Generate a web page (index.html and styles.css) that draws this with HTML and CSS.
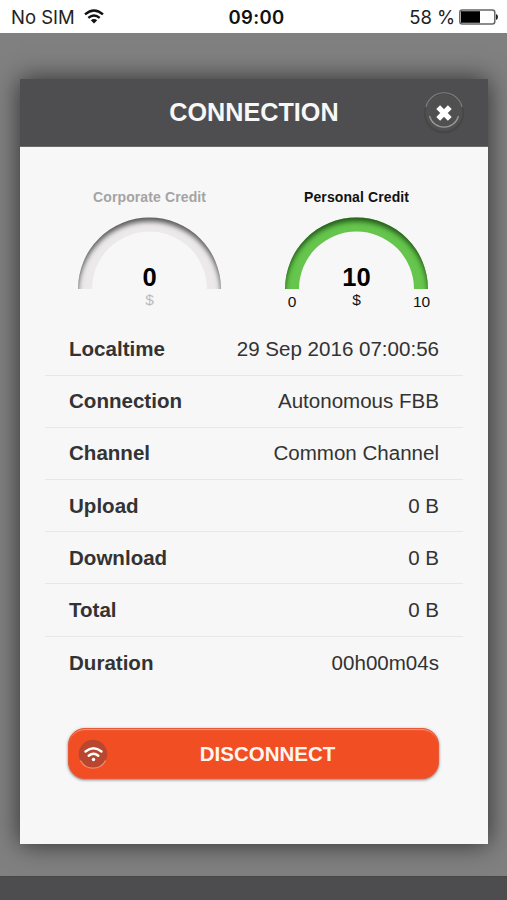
FILE: index.html
```html
<!DOCTYPE html>
<html lang="en">
<head>
<meta charset="utf-8">
<title>Connection</title>
<link rel="stylesheet" href="styles.css">
</head>
<body>
<header class="status">
  <div class="carrier"><span>No SIM</span>
    <svg width="20" height="16" viewBox="0 0 20 16"><g fill="none" stroke="#111" stroke-width="2.4"><path d="M1 5.4Q10-2.4 19 5.4"/><path d="M4.3 8.9Q10 4 15.700 8.900"/></g><path d="M6.800 11.300Q10 8.700 13.200 11.300L10 14.500Z" fill="#111"/></svg>
  </div>
  <div class="clock">09:00</div>
  <div class="battery"><span>58 %</span>
    <svg width="40" height="16" viewBox="0 0 40 16"><rect x=".8" y="1" width="35" height="14" rx="2.500" fill="#fff" stroke="#666" stroke-width="1.500"/><path d="M2 2.200H21V13.800H2Z"/><path d="M37 5Q39 5.500 39 8T37 11Z" fill="#222"/></svg>
  </div>
</header>
<main class="page">
  <section class="modal">
    <div class="modal-head">
      <h1>CONNECTION</h1>
      <button class="close" aria-label="Close">
        <svg width="42" height="42" viewBox="0 0 42 42"><circle cx="21" cy="21.500" r="20" fill="#464647"/><circle cx="21" cy="20.500" r="18.500" fill="#505051"/><g fill="none" stroke-width="1.200"><path d="M3 15A18.500 18.500 0 0 1 39 15" stroke="#7c7c7d"/><path d="M6.500 24A15 15 0 0 0 35.500 24" stroke="#9a9a9a"/></g><path d="M15.200 15.200L26.800 26.800M26.800 15.200L15.200 26.800" stroke="#fff" stroke-width="5.400"/></svg>
      </button>
    </div>
    <div class="gauges">
      <svg class="gauge" width="207" height="130" viewBox="0 0 207 130">
        <defs>
          <clipPath id="arc"><path d="M32 105A71.500 71.500 0 0 1 175 105H161A57.500 57.500 0 0 0 46 105Z"/></clipPath>
          <filter id="soft" x="-20%" y="-20%" width="140%" height="140%"><feGaussianBlur stdDeviation="2.500"/></filter>
        </defs>
        <text class="label muted" x="103.500" y="18" textLength="113">Corporate Credit</text>
        <g clip-path="url(#arc)"><path d="M30 30H180V106H30Z" fill="#ebe9ea"/><path d="M20 20H190V120H175V109A71.500 71.500 0 0 0 32 109V120H20Z" fill="#5c5c5c" filter="url(#soft)"/></g>
        <text class="value" x="103.500" y="102">0</text>
        <text class="unit muted-light" x="103.500" y="121">$</text>
      </svg>
      <svg class="gauge" width="207" height="130" viewBox="0 0 207 130">
        <text class="label" x="103.500" y="18" textLength="105">Personal Credit</text>
        <g clip-path="url(#arc)"><path d="M30 30H180V106H30Z" fill="#65c54c"/><path d="M20 20H190V120H175V109A71.500 71.500 0 0 0 32 109V120H20Z" fill="#275d1d" filter="url(#soft)"/></g>
        <text class="value" x="103.500" y="102">10</text>
        <text class="unit" x="103.500" y="121">$</text>
        <text class="unit" x="39" y="123">0</text>
        <text class="unit" x="168.500" y="123">10</text>
      </svg>
    </div>
    <dl class="details">
      <div><dt>Localtime</dt><dd>29 Sep 2016 07:00:56</dd></div>
      <div><dt>Connection</dt><dd>Autonomous FBB</dd></div>
      <div><dt>Channel</dt><dd>Common Channel</dd></div>
      <div><dt>Upload</dt><dd>0 B</dd></div>
      <div><dt>Download</dt><dd>0 B</dd></div>
      <div><dt>Total</dt><dd>0 B</dd></div>
      <div><dt>Duration</dt><dd>00h00m04s</dd></div>
    </dl>
    <button class="disconnect">
      <svg width="30" height="30" viewBox="0 0 30 30"><circle cx="15" cy="15" r="14.300" fill="#b94730"/><path d="M2.500 21.500A14 14 0 0 0 27.500 21.500" fill="none" stroke="#f08d74" stroke-width="1.200"/><g fill="none" stroke="#fff" stroke-width="2.400" stroke-linecap="round"><path d="M7.500 12.500Q15.500 6 23.500 12.500"/><path d="M10.700 16.700Q15.500 12.800 20.300 16.700"/></g><circle cx="15.500" cy="20.500" r="1.700" fill="#fff"/></svg>
      <span>DISCONNECT</span>
    </button>
  </section>
</main>
<footer class="bottom"></footer>
</body>
</html>
```

FILE: styles.css
```css
* { box-sizing: border-box; }
body {
  margin: 0;
  width: 507px;
  height: 900px;
  overflow: hidden;
  display: flex;
  flex-direction: column;
  background: #808080;
  font-family: "Liberation Sans", Arial, sans-serif;
}
.status {
  height: 33px;
  flex: none;
  background: #fff;
  display: grid;
  grid-template-columns: 1fr auto 1fr;
  align-items: center;
  padding: 2px 8px 0 11px;
  font: 18.500px/31px Inter, sans-serif;
  color: #222;
}
.carrier, .battery { display: flex; align-items: center; }
.carrier { gap: 9px; }
.carrier svg, .battery svg { margin-top: -2px; }
.battery { gap: 4px; justify-content: flex-end; letter-spacing: -.1px; }
.clock { font-weight: 600; color: #111; letter-spacing: .3px; padding-left: 3px; }
.page { height: 843px; flex: none; padding: 46px 19px 0 20px; }
.modal {
  height: 765px;
  background: #f7f7f7;
  box-shadow: 0 0 24px rgba(0, 0, 0, .65);
}
.modal-head {
  height: 68px;
  background: #4e4e50;
  border-bottom: 1px solid #6a6a6b;
  display: grid;
  grid-template-columns: 42px 1fr 42px;
  align-items: center;
  padding: 0 23px;
}
h1 {
  grid-column: 2;
  margin: -2px 0 0;
  text-align: center;
  font-size: 25.200px;
  line-height: 30px;
  color: #f7f7f7;
}
button { border: 0; padding: 0; font-family: inherit; }
.close { background: none; width: 42px; height: 42px; }
.close svg { display: block; }
.gauges { display: flex; padding: 37px 0 0 26px; height: 176px; }
.gauge { flex: none; }
.gauge text { text-anchor: middle; fill: #111; }
.gauge .label { font-size: 14px; font-weight: bold; }
.gauge .value { font-size: 25.500px; font-weight: bold; fill: #000; }
.gauge .unit { font-size: 15.500px; }
.gauge .muted { fill: #a4a4a4; }
.gauge .muted-light { fill: #bbb; }
.details { margin: 0 25px; padding-top: .4px; }
.details div {
  height: 52.200px;
  display: flex;
  justify-content: space-between;
  align-items: center;
  padding: 0 24px;
  font-size: 20.550px;
  color: #333;
  border-bottom: 1px solid #e7e7e7;
}
.details div:last-child { border: 0; }
dt { font-weight: bold; }
dd { margin: 0; }
.disconnect {
  display: grid;
  grid-template-columns: 30px 1fr;
  align-items: center;
  width: 371px;
  height: 51px;
  margin: 39.600px 0 0 48px;
  padding: 0 11px 0 9px;
  border-radius: 17px;
  background: #f24e23;
  border: 1px solid #e8593a;
  box-shadow: 0 1px 3px rgba(0, 0, 0, .5), inset 0 2px 1px -1px #ff9c80;
  color: #fff5ef;
  font-size: 20.500px;
  font-weight: bold;
}
.disconnect svg { display: block; }
.disconnect span { padding-top: 1px; }
.bottom { height: 24px; flex: none; background: #4d4d4f; border-top: 1px solid #474748; }
```
